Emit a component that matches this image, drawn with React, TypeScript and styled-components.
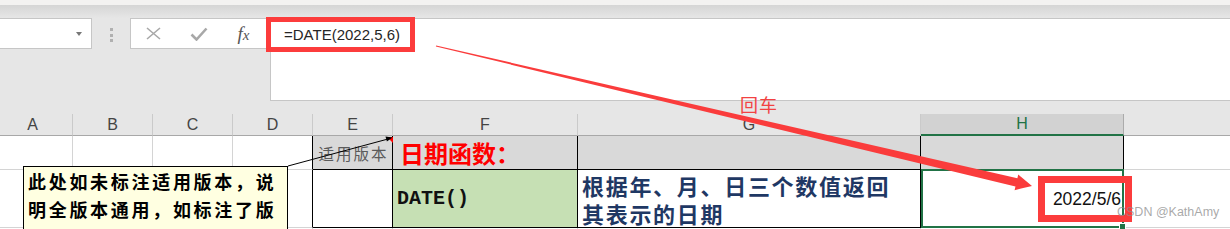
import React from 'react';
import styled, { createGlobalStyle } from 'styled-components';

const CJK = `"Noto Sans CJK SC", "Noto Sans", sans-serif`;

const GlobalStyle = createGlobalStyle`
  html, body {
    margin: 0;
    padding: 0;
    background: #fff;
  }
  body {
    overflow: hidden;
    font-family: "Liberation Sans", Arial, sans-serif;
  }
`;

const Page = styled.div`
  position: relative;
  width: 1230px;
  height: 229px;
  overflow: hidden;
  background: #e6e6e6;
`;

const TitleStrip = styled.div`
  height: 5px;
  background: #f3f2f1;
`;

const Shade = styled.div`
  height: 13px;
  background: linear-gradient(#d5d5d5, #e6e6e6);
`;

const FormulaRow = styled.div`
  display: flex;
  align-items: flex-start;
  height: 83px;
`;

const NameBox = styled.div`
  width: 92px;
  height: 31px;
  box-sizing: border-box;
  background: #fff;
  border: 1px solid #c6c6c6;
  border-left: none;
  display: flex;
  align-items: center;
  justify-content: flex-end;
  padding-right: 9px;
`;

const DropArrow = styled.span`
  width: 0;
  height: 0;
  border-left: 3px solid transparent;
  border-right: 3px solid transparent;
  border-top: 4px solid #777;
`;

const Grip = styled.div`
  width: 38px;
  padding-top: 10px;
  display: flex;
  flex-direction: column;
  align-items: center;
  gap: 2.5px;
`;

const GripDot = styled.span`
  width: 3px;
  height: 3px;
  background: #b0b0b0;
`;

const FxBox = styled.div`
  width: 140px;
  height: 31px;
  box-sizing: border-box;
  background: #fff;
  border: 1px solid #c6c6c6;
  border-right: none;
  display: flex;
  align-items: center;
`;

const FxSlot = styled.div`
  width: 45px;
  display: flex;
  justify-content: center;
  align-items: center;
`;

const FxLabel = styled.span`
  font-family: "Liberation Serif", serif;
  font-style: italic;
  font-size: 19px;
  color: #555;
  line-height: 1;
  span {
    font-size: 15px;
  }
`;

const FormulaInput = styled.div`
  flex: 1;
  height: 83px;
  box-sizing: border-box;
  background: #fff;
  border: 1px solid #c6c6c6;
  border-right: none;
  display: flex;
  align-items: flex-start;
`;

const FormulaHighlight = styled.div`
  margin: -2px 0 0 -5px;
  width: 149px;
  height: 35px;
  box-sizing: border-box;
  border: 5px solid #fc3c3c;
  padding-left: 13px;
  font-size: 15px;
  line-height: 25px;
  color: #262626;
  white-space: nowrap;
`;

const GapBand = styled.div`
  height: 13px;
`;

const SheetGrid = styled.div`
  margin-left: -7px;
  display: grid;
  grid-template-columns: 80px 80px 80px 80px 80px 185px 343px 203px 113px;
  grid-template-rows: 22px 34px 58px 30px;
  background: #fff;
`;

const HeaderCell = styled.div<{ $active?: boolean }>`
  box-sizing: border-box;
  display: flex;
  align-items: center;
  justify-content: center;
  font-size: 16px;
  background: ${p => (p.$active ? '#d2d2d2' : '#e6e6e6')};
  color: ${p => (p.$active ? '#217346' : '#444')};
  border-right: 1px solid ${p => (p.$active ? '#ababab' : '#cacaca')};
  border-bottom: ${p => (p.$active ? '2px solid #217346' : '1px solid #a8a8a8')};
`;

const Cell = styled.div<{ $fill?: string; $dark?: boolean; $darkRight?: boolean }>`
  position: relative;
  box-sizing: border-box;
  display: flex;
  align-items: center;
  background: ${p => p.$fill || '#fff'};
  border-right: 1px solid ${p => (p.$dark || p.$darkRight ? '#000' : '#d4d4d4')};
  border-bottom: 1px solid ${p => (p.$dark ? '#000' : '#d4d4d4')};
`;

const SelectedCell = styled(Cell)`
  justify-content: flex-end;
  z-index: 1;
  &::before {
    content: '';
    position: absolute;
    top: -1px;
    left: 0;
    right: -1px;
    bottom: -1px;
    border: 2px solid #217346;
  }
  &::after {
    content: '';
    position: absolute;
    right: -3px;
    bottom: -3px;
    width: 5px;
    height: 5px;
    background: #217346;
    border: 1px solid #fff;
  }
`;

const VersionLabel = styled.div`
  width: 100%;
  text-align: center;
  padding-left: 2px;
  font-family: ${CJK};
  font-size: 15.5px;
  letter-spacing: 2px;
  color: #5a5a5a;
`;

const SectionTitle = styled.div`
  padding-left: 7px;
  font-family: ${CJK};
  font-size: 24px;
  font-weight: 700;
  color: #ff0000;
`;

const FuncName = styled.div`
  padding-left: 4px;
  font-family: "Liberation Mono", monospace;
  font-size: 20px;
  font-weight: 700;
  color: #111;
`;

const Description = styled.div`
  align-self: flex-start;
  padding: 1px 0 0 4px;
  font-family: ${CJK};
  font-size: 22px;
  font-weight: 700;
  letter-spacing: 1.7px;
  line-height: 28px;
  color: #1f3864;
  white-space: nowrap;
`;

const DateBox = styled.div`
  position: relative;
  z-index: 2;
  margin-right: -9px;
  width: 94px;
  height: 46px;
  box-sizing: border-box;
  border: 7px solid #fc3c3c;
  padding-right: 4px;
  text-align: right;
  font-size: 17.5px;
  line-height: 32px;
  color: #111;
`;

const CommentBox = styled.div`
  position: absolute;
  left: 23px;
  top: 166px;
  width: 265px;
  height: 80px;
  box-sizing: border-box;
  background: #ffffe1;
  border: 1px solid #000;
  padding-left: 4px;
  font-family: ${CJK};
  font-size: 18px;
  font-weight: 700;
  letter-spacing: 2.7px;
  line-height: 28px;
  color: #000;
  z-index: 3;
`;

const Annotation = styled.svg`
  position: absolute;
  left: 0;
  top: 0;
  pointer-events: none;
  z-index: 4;
`;

const EnterLabel = styled.div`
  position: absolute;
  left: 740px;
  top: 92px;
  font-family: ${CJK};
  font-size: 18px;
  line-height: 24px;
  letter-spacing: 1px;
  color: #f24242;
  z-index: 4;
`;

const Watermark = styled.div`
  position: absolute;
  left: 1117px;
  top: 205px;
  font-size: 12.5px;
  color: rgba(140, 140, 140, 0.75);
  z-index: 5;
`;

const COLUMNS = ['A', 'B', 'C', 'D', 'E', 'F', 'G', 'H', ''];

export default function App() {
  return (
    <>
      <GlobalStyle />
      <Page>
        <TitleStrip />
        <Shade />
        <FormulaRow>
          <NameBox>
            <DropArrow />
          </NameBox>
          <Grip>
            <GripDot />
            <GripDot />
            <GripDot />
          </Grip>
          <FxBox>
            <FxSlot>
              <svg width="15" height="13" viewBox="0 0 15 13">
                <path d="M1 1 L14 12 M14 1 L1 12" stroke="#a8a8a8" strokeWidth="1.6" fill="none" />
              </svg>
            </FxSlot>
            <FxSlot>
              <svg width="18" height="14" viewBox="0 0 18 14">
                <path d="M1.5 7.5 L6.5 12.5 L16.5 1.5" stroke="#a8a8a8" strokeWidth="2.6" fill="none" />
              </svg>
            </FxSlot>
            <FxSlot>
              <FxLabel>
                f<span>x</span>
              </FxLabel>
            </FxSlot>
          </FxBox>
          <FormulaInput>
            <FormulaHighlight>=DATE(2022,5,6)</FormulaHighlight>
          </FormulaInput>
        </FormulaRow>
        <GapBand />
        <SheetGrid>
          {COLUMNS.map((c, i) => (
            <HeaderCell key={i} $active={c === 'H'}>
              {c}
            </HeaderCell>
          ))}

          <Cell />
          <Cell />
          <Cell />
          <Cell $darkRight />
          <Cell $dark $fill="#d9d9d9">
            <VersionLabel>适用版本</VersionLabel>
          </Cell>
          <Cell $dark $fill="#d9d9d9">
            <SectionTitle>日期函数：</SectionTitle>
          </Cell>
          <Cell $dark $fill="#d9d9d9" />
          <Cell $dark $fill="#d9d9d9" />
          <Cell />

          <Cell />
          <Cell />
          <Cell />
          <Cell $darkRight />
          <Cell $dark />
          <Cell $dark $fill="#c6e0b4">
            <FuncName>DATE()</FuncName>
          </Cell>
          <Cell $dark>
            <Description>
              根据年、月、日三个数值返回
              <br />
              其表示的日期
            </Description>
          </Cell>
          <SelectedCell $dark>
            <DateBox>2022/5/6</DateBox>
          </SelectedCell>
          <Cell />

          {COLUMNS.map((_, i) => (
            <Cell key={`r3-${i}`} />
          ))}
        </SheetGrid>

        <CommentBox>此处如未标注适用版本，说明全版本通用，如标注了版本，则说明该版本及其之后版本适用</CommentBox>

        <Annotation width="1230" height="229" viewBox="0 0 1230 229">
          <polygon points="387,137 393,137 393,143" fill="#ff0000" />
          <line x1="288" y1="166" x2="388" y2="139" stroke="#000" strokeWidth="1" />
          <polygon points="392.5,137.5 386.9,141.5 385.5,136.5" fill="#000" />
          <polygon
            points="436.11,45.51 1017.38,178.25 1018.25,174.55 1032,186 1014.59,190.13 1015.46,186.43 435.89,46.49"
            fill="#fa3c3c"
          />
        </Annotation>

        <EnterLabel>回车</EnterLabel>
        <Watermark>CSDN @KathAmy</Watermark>
      </Page>
    </>
  );
}
